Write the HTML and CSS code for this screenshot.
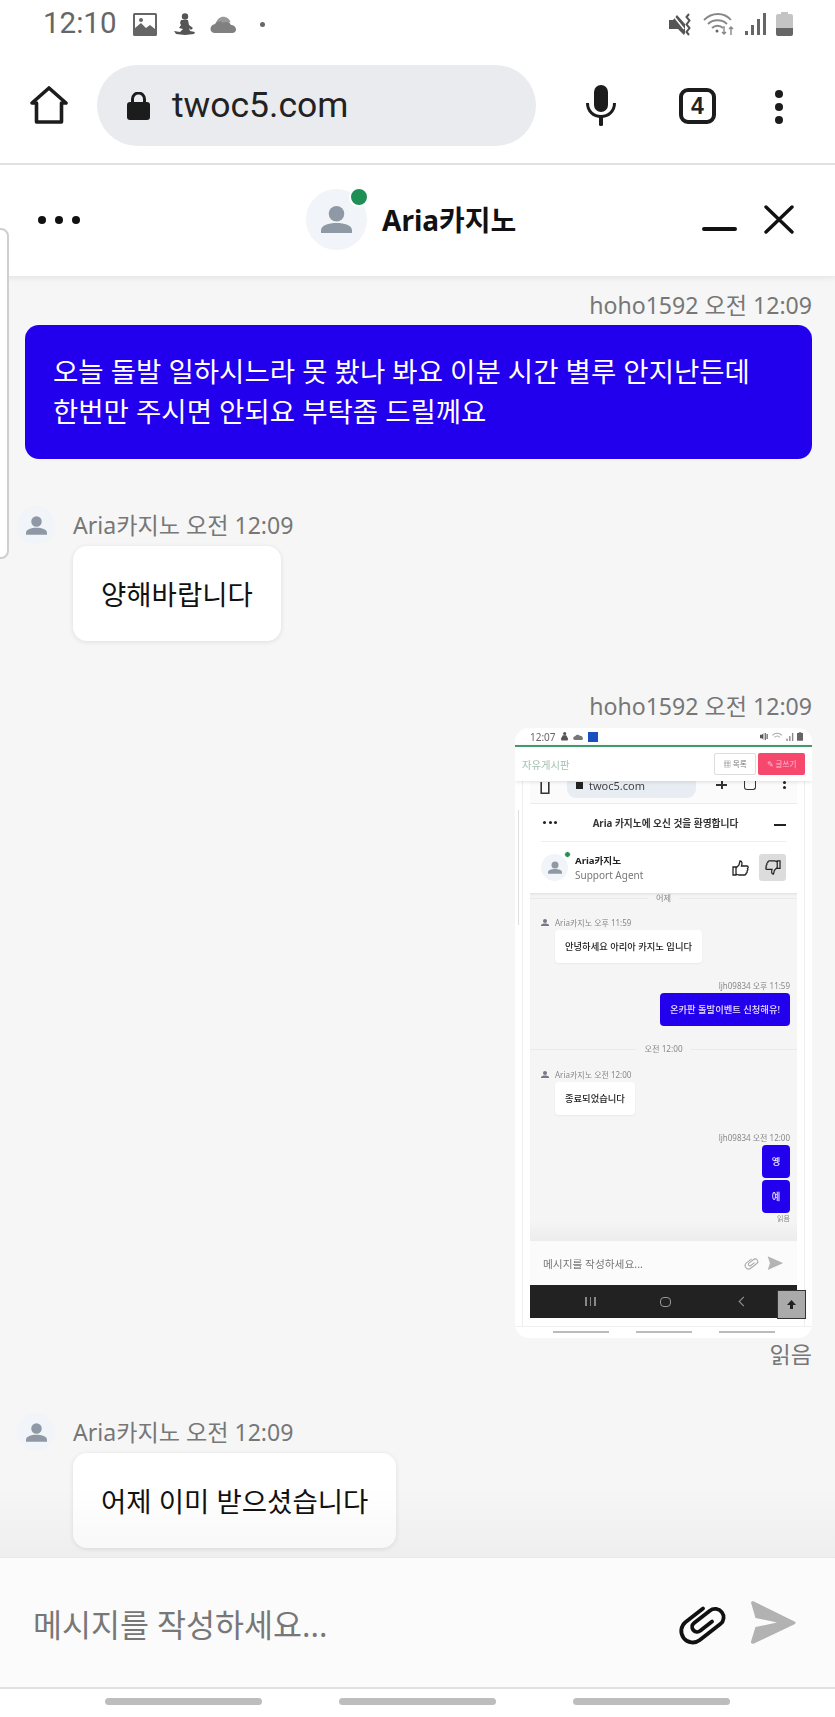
FILE: index.html
```html
<!DOCTYPE html>
<html lang="ko">
<head>
<meta charset="utf-8">
<title>Aria카지노</title>
<link rel="stylesheet" href="styles.css">
</head>
<body>
<svg class="defs" width="0" height="0">
  <symbol id="person" viewBox="0 0 32 28">
    <circle cx="16" cy="8" r="8"/>
    <path d="M0 28v-3c0-5 8-7.500 16-7.500S32 20 32 25v3z"/>
  </symbol>
</svg>
<div class="page">
  <header class="statusbar">
    <span class="clock">12:10</span>
    <svg class="st-pic" width="24" height="23" viewBox="0 0 24 23"><rect width="24" height="23" rx="1.500" fill="#666"/><rect x="2" y="2" width="20" height="19" fill="#fff"/><path d="M2 21v-6l6-5 5 5 4-3 5 4v5z" fill="#666"/><circle cx="8" cy="7" r="2" fill="#666"/></svg>
    <svg class="st-fig" width="21" height="23" viewBox="0 0 21 23" fill="#555"><circle cx="11" cy="3.500" r="3.200"/><path d="M7 7h7l1 5 4 3-2 2-2-2 1 3 5 1-1 2-9 1-9-1-2-3 6 1 3-3-4-1 2-3-1-2z"/></svg>
    <svg class="st-cloud" width="27" height="17" viewBox="0 0 27 17"><path d="M6 7c1-4 5-7 9-6 3 .5 5 3 5.500 5L12 10z" fill="#999"/><path d="M5 17c-6 0-6-8 0-9 2-3 6-3 8-1 3-2 7-1 8 2 6 0 7 8 1 8z" fill="#808080"/></svg>
    <span class="st-dot"></span>
    <span class="st-right">
      <svg width="24" height="23" viewBox="0 0 24 23" fill="#555"><path d="M0 7h4l4-5 8 9v9l-1 2-6-6H0z"/><path d="M3 1l12 15" stroke="#fff" stroke-width="1.500"/><path d="M20 1l-2.500 3 3 3.500-3 4 3 3.500-3 4 2.500 3" fill="none" stroke="#555" stroke-width="2"/></svg>
      <svg width="32" height="23" viewBox="0 0 32 23" fill="none" stroke="#888" stroke-width="1.800"><path d="M1 7c8-8 20-8 27 0"/><path d="M5 11c5-5 14-5 19 0"/><path d="M9 15c3-3 8-3 11 0"/><circle cx="14" cy="18" r="1.500" fill="#666" stroke="none"/><path d="M21 13v8m-2-2 2 2 2-2M28 22v-8m-2 2 2-2 2 2" stroke-width="1.400"/></svg>
      <svg width="21" height="23" viewBox="0 0 21 23" fill="#666"><rect x="0" y="18" width="3" height="4"/><rect x="6" y="12" width="3" height="10"/><rect x="12" y="6" width="3" height="16"/><rect x="18" y="0" width="3" height="22"/></svg>
      <svg class="st-batt" width="17" height="24" viewBox="0 0 17 24"><path d="M5 0h7v2h3a2 2 0 0 1 2 2v15H0V4a2 2 0 0 1 2-2h3z" fill="#c4c4c4"/><path d="M0 16h17v6a2 2 0 0 1-2 2H2a2 2 0 0 1-2-2z" fill="#666"/></svg>
    </span>
  </header>

  <nav class="toolbar">
    <svg class="home" width="38" height="38" viewBox="0 0 38 38" fill="none" stroke="#1c1c1c" stroke-width="3.600" stroke-linejoin="round"><path d="M2 17 19 2l17 15h-4.500v19h-25V17z"/></svg>
    <div class="urlpill">
      <svg width="23" height="28" viewBox="0 0 23 28"><path d="M5.500 11V7a6 6 0 0 1 12 0v4" fill="none" stroke="#1c1c1c" stroke-width="3"/><rect y="10" width="23" height="18" rx="3" fill="#1c1c1c"/></svg>
      <span class="url">twoc5.com</span>
    </div>
    <svg class="mic" width="30" height="41" viewBox="0 0 30 41"><rect x="8" y="0" width="14" height="27" rx="7" fill="#1c1c1c"/><path d="M1.500 18c0 18 27 18 27 0" fill="none" stroke="#1c1c1c" stroke-width="3"/><rect x="13" y="30" width="4" height="11" rx="1.500" fill="#1c1c1c"/></svg>
    <div class="tabs">4</div>
    <div class="kebab"><i></i><i></i><i></i></div>
  </nav>

  <section class="chat-header">
    <div class="hdots"><i></i><i></i><i></i></div>
    <div class="havatar">
      <svg class="hperson" width="31" height="29"><use href="#person"/></svg>
      <span class="online"></span>
    </div>
    <div class="htitle">Aria카지노</div>
    <div class="hactions">
      <span class="minus"></span>
      <svg width="30" height="29" viewBox="0 0 30 29" fill="none" stroke="#111" stroke-width="3.400" stroke-linecap="round"><path d="M2 2l26 25M28 2 2 27"/></svg>
    </div>
  </section>

  <main class="chat-body">
    <div class="meta meta-right">hoho1592 오전 12:09</div>
    <div class="bubble bubble-blue">오늘 돌발 일하시느라 못 봤나 봐요 이분 시간 별루 안지난든데 한번만 주시면 안되요 부탁좀 드릴께요</div>

    <div class="agent-row first">
      <span class="mini-avatar"><svg width="21" height="19"><use href="#person"/></svg></span>
      <span class="meta">Aria카지노 오전 12:09</span>
    </div>
    <div class="bubble bubble-white">양해바랍니다</div>

    <div class="meta meta-right second">hoho1592 오전 12:09</div>

    <figure class="shot">
      <div class="shot-status">
        <span>12:07</span>
        <svg width="9" height="9" viewBox="0 0 21 23" fill="#555"><circle cx="11" cy="4" r="4"/><path d="M6 8h9l5 10-2 4H3L1 18z"/></svg>
        <svg width="11" height="7" viewBox="0 0 27 17"><path d="M5 17c-6 0-6-8 0-9 2-4 9-6 12-1 6-2 10 8 5 10z" fill="#777"/></svg>
        <span class="shot-thumb"></span>
        <span class="shot-status-r">
          <svg width="9" height="9" viewBox="0 0 24 23" fill="#555"><path d="M0 7h5l4-4v17l-4-4H0z"/><path d="M14 2v19M19 5v13" stroke="#555" stroke-width="3"/></svg>
          <svg width="11" height="9" viewBox="0 0 32 23" fill="none" stroke="#aaa" stroke-width="3"><path d="M1 8c8-8 20-8 28 0M7 14c5-5 11-5 16 0"/></svg>
          <svg width="8" height="8" viewBox="0 0 21 23" fill="#888"><rect y="16" width="4" height="7"/><rect x="8" y="9" width="4" height="14"/><rect x="16" width="4" height="23"/></svg>
          <svg width="6" height="9" viewBox="0 0 17 24" fill="#666"><path d="M5 0h7v2h5v22H0V2h5z"/></svg>
        </span>
      </div>
      <div class="shot-subhead">
        <span class="shot-board">자유게시판</span>
        <span class="shot-list">▦ 목록</span>
        <span class="shot-write">✎ 글쓰기</span>
      </div>
      <div class="shot-frame">
        <div class="shot-browser">
          <svg width="12" height="12" viewBox="0 0 38 38" fill="none" stroke="#333" stroke-width="5"><path d="M7 0v36h24V0"/></svg>
          <span class="shot-url"><i></i>twoc5.com</span>
          <span class="shot-plus"></span>
          <span class="shot-tab"></span>
          <span class="shot-kebab"><i></i><i></i></span>
        </div>
        <div class="shot-title">
          <span class="shot-dots"><i></i><i></i><i></i></span>
          <span class="shot-title-text">Aria 카지노에 오신 것을 환영합니다</span>
          <span class="shot-minus"></span>
        </div>
        <div class="shot-agent">
          <span class="shot-avatar"><svg width="14" height="13"><use href="#person"/></svg><b></b></span>
          <span class="shot-agent-text"><strong>Aria카지노</strong><span>Support Agent</span></span>
          <svg class="shot-like" width="17" height="16" viewBox="0 0 17 16" fill="none" stroke="#222" stroke-width="1.300"><path d="M1 7h3v8H1zM4 8l3-3 1-4c2 0 2.500 2 1.500 5H15c1.500 0 1.500 2 .5 2.500.8 1 .3 2-.5 2.500.4 1 0 2-1 2.300.2 1-.5 1.700-1.500 1.700H7c-1 0-2-.5-3-1"/></svg>
          <span class="shot-dislike"><svg width="16" height="15" viewBox="0 0 17 16" fill="none" stroke="#222" stroke-width="1.300"><path d="M16 9h-3V1h3zM13 8l-3 3-1 4c-2 0-2.500-2-1.500-5H2C.5 10 .5 8 1.500 7.500.7 6.500 1.200 5.500 2 5c-.4-1-.1-2 1-2.300C2.800 1.700 3.500 1 4.500 1H10c1 0 2 .5 3 1"/></svg></span>
        </div>
        <div class="shot-chat">
          <div class="shot-sep shot-sep-top"><span>어제</span></div>
          <div class="shot-meta-row s1"><svg width="8" height="7"><use href="#person"/></svg><span>Aria카지노 오후 11:59</span></div>
          <div class="shot-bub shot-white">안녕하세요 아리아 카지노 입니다</div>
          <div class="shot-meta-r s2">ljh09834 오후 11:59</div>
          <div class="shot-bub shot-blue">온카판 돌발이벤트 신청해유!</div>
          <div class="shot-sep s3"><span>오전 12:00</span></div>
          <div class="shot-meta-row s4"><svg width="8" height="7"><use href="#person"/></svg><span>Aria카지노 오전 12:00</span></div>
          <div class="shot-bub shot-white">종료되었습니다</div>
          <div class="shot-meta-r s5">ljh09834 오전 12:00</div>
          <div class="shot-bub shot-blue shot-tiny">옝</div>
          <div class="shot-bub shot-blue shot-tiny s6">예</div>
          <div class="shot-read">읽음</div>
        </div>
        <div class="shot-composer">
          <span class="shot-place">메시지를 작성하세요...</span>
          <svg width="16" height="14" viewBox="-2 -2 54 44" fill="none" stroke="#aaa" stroke-width="3.500"><g transform="rotate(-38 25 19)"><path d="M32 8H10a11.500 11.500 0 0 0 0 23h26a8.500 8.500 0 0 0 0-17H16a5 5 0 0 0 0 10h16"/></g></svg>
          <svg width="16" height="14" viewBox="0 0 47 43"><path d="M1 1l45 20a1 1 0 0 1 0 2L1 43l7-21z" fill="#b4b4b4"/></svg>
        </div>
        <div class="shot-nav">
          <span class="shot-iii"><i></i><i></i><i></i></span>
          <span class="shot-o"></span>
          <span class="shot-back"></span>
        </div>
        <div class="shot-gap"></div>
      </div>
      <div class="shot-pills"><i></i><i></i><i></i></div>
      <span class="shot-top"><svg width="11" height="11" viewBox="0 0 11 11" fill="#222"><path d="M5.500 1 10 6H7v4H4V6H1z"/></svg></span>
      <span class="shot-edge"></span>
    </figure>
    <div class="meta meta-right read">읽음</div>

    <div class="agent-row third">
      <span class="mini-avatar"><svg width="21" height="19"><use href="#person"/></svg></span>
      <span class="meta">Aria카지노 오전 12:09</span>
    </div>
    <div class="bubble bubble-white b3">어제 이미 받으셨습니다</div>
    <div class="fade"></div>
  </main>

  <footer class="composer">
    <span class="placeholder">메시지를 작성하세요...</span>
    <svg class="clip" width="46" height="40" viewBox="0 0 46 40" fill="none" stroke="#111" stroke-width="3.800" stroke-linecap="round"><g transform="rotate(-38 23 20)"><path d="M32 8.500H10a11.500 11.500 0 0 0 0 23h26a8.500 8.500 0 0 0 0-17H16a5 5 0 0 0 0 10h15"/></g></svg>
    <svg class="send" width="47" height="43" viewBox="0 0 47 43"><path d="M2 1.500c.5-1 1.500-1.500 3-1l40.500 20c1.500.7 1.500 2 0 2.700L5 42.500c-2 .7-3.500-.5-3-2L6.500 26 28 21.500 6.500 17z" fill="#b2b2b2"/></svg>
  </footer>

  <div class="navbar"><i></i><i></i><i></i></div>

  <span class="side-panel"></span>
</div>
</body>
</html>
```

FILE: styles.css
```css
* { box-sizing: border-box; }
html, body { margin: 0; padding: 0; background: #fff; }
.defs { position: absolute; }
.page {
  position: relative;
  width: 835px;
  height: 1717px;
  overflow: hidden;
  display: flex;
  flex-direction: column;
  font-family: "Noto Sans", "Noto Sans CJK KR", sans-serif;
  color: #111;
}

/* status bar */
.statusbar { height: 48px; display: flex; align-items: center; padding: 0 42px 0 43px; flex: none; }
.clock { font: 29.500px/1 Roboto, sans-serif; color: #666; width: 90px; }
.st-fig { margin-left: 17px; }
.st-cloud { margin-left: 15px; }
.st-dot { width: 5px; height: 5px; border-radius: 50%; background: #666; margin-left: 23px; }
.st-right { margin-left: auto; display: flex; align-items: center; gap: 10px; }

/* browser toolbar */
.toolbar { height: 117px; flex: none; display: flex; align-items: flex-start; border-bottom: 2px solid #e3e3e3; padding-left: 30px; position: relative; }
.home { margin-top: 38px; }
.urlpill { width: 439px; height: 81px; margin: 17px 0 0 29px; border-radius: 41px; background: #e9ebef; display: flex; align-items: center; padding-left: 30px; gap: 22px; }
.url { font: 35.500px/1 Roboto, sans-serif; color: #222; }
.mic { margin: 37px 0 0 50px; }
.tabs { width: 37px; height: 36px; margin: 40px 0 0 63px; border: 4px solid #1c1c1c; border-radius: 9px; font: bold 23px/28px "Liberation Sans Narrow", "Liberation Sans", sans-serif; text-align: center; color: #222; }
.kebab { margin: 42px 0 0 59px; display: flex; flex-direction: column; gap: 5px; }
.kebab i { width: 8px; height: 8px; border-radius: 50%; background: #1c1c1c; display: block; }

/* chat header */
.chat-header { height: 111px; flex: none; display: flex; align-items: center; padding-left: 38px; background: #fff; box-shadow: 0 2px 6px rgba(0,0,0,.08); position: relative; z-index: 2; }
.hdots { display: flex; gap: 9px; margin-top: -2px; }
.hdots i { width: 8px; height: 8px; border-radius: 50%; background: #111; display: block; }
.havatar { width: 61px; height: 61px; margin: -2px 0 0 226px; border-radius: 50%; background: #f1f4f8; position: relative; display: flex; align-items: center; justify-content: center; }
.hperson { fill: #8f99a5; margin-top: -1px; }
.online { position: absolute; top: -2px; right: -2px; width: 20px; height: 20px; border-radius: 50%; background: #1f8f55; border: 2px solid #fff; }
.htitle { font-size: 28px; font-weight: 700; margin: -2px 0 0 15px; line-height: 36px; }
.hactions { margin-left: auto; padding-right: 41px; display: flex; align-items: center; gap: 27px; margin-top: -2px; }
.minus { width: 35px; height: 4px; border-radius: 2px; background: #111; margin-top: 19px; }

/* chat body */
.chat-body { flex: 1; min-height: 0; position: relative; background: #f6f6f6; padding: 14px 23px 0 25px; display: flex; flex-direction: column; overflow: hidden; }
.chat-body > * { flex: none; }
.meta { font-size: 23.100px; line-height: 30px; color: #777; }
.meta-right { text-align: right; }
.second { margin-top: 50px; }
.read { margin-top: 1px; }
.bubble { font-size: 27.500px; line-height: 40px; border-radius: 14px; word-break: keep-all; }
.bubble-blue { margin-top: 5px; background: #2200ee; color: #fff; padding: 27px 28px; width: 787px; }
.bubble-white { align-self: flex-start; margin: 2px 0 0 48px; background: #fff; color: #111; padding: 29px 28px 26px; box-shadow: 0 1px 5px rgba(0,0,0,.1); }
.b3 { margin-top: 2px; }
.agent-row { display: flex; align-items: center; gap: 18px; margin-left: -8px; height: 38px; }
.first { margin-top: 47px; }
.third { margin-top: 44px; }
.mini-avatar { width: 38px; height: 38px; border-radius: 50%; background: #f1f4f8; display: flex; align-items: center; justify-content: center; fill: #8f99a5; flex: none; }
.fade { position: absolute; left: 0; right: 0; bottom: 0; height: 70px; background: linear-gradient(rgba(0,0,0,0), rgba(0,0,0,.03)); }

/* composer */
.composer { height: 132px; flex: none; background: #fbfbfb; border-top: 1px solid #e9e9e9; border-bottom: 2px solid #e1e1e1; display: flex; align-items: center; padding: 0 39px 0 33px; }
.placeholder { font-size: 31.500px; color: #777; margin-right: auto; }
.clip { margin-right: 23px; overflow: visible; }
.navbar { height: 28px; flex: none; display: flex; align-items: flex-start; justify-content: center; gap: 77px; padding-top: 9px; }
.navbar i { width: 157px; height: 7px; border-radius: 4px; background: #bdbdbd; display: block; }
.side-panel { position: absolute; left: -10px; top: 228px; width: 19px; height: 331px; border: 2px solid #cfcfcf; border-radius: 8px; background: #fff; z-index: 3; }

/* embedded screenshot */
.shot { position: relative; align-self: flex-end; margin: 7px 0 0; width: 297px; height: 610px; background: #fff; border-radius: 14px; overflow: hidden; display: flex; flex-direction: column; filter: blur(.3px); color: #222; }
.shot-status { height: 17px; flex: none; display: flex; align-items: center; gap: 4px; padding: 0 9px 0 15px; font-size: 10px; color: #666; }
.shot-thumb { width: 10px; height: 10px; background: #1a4fc0; }
.shot-status-r { margin-left: auto; display: flex; align-items: center; gap: 3px; }
.shot-subhead { height: 36px; flex: none; border-top: 2px solid #3f9a6c; background: #fff; display: flex; align-items: center; padding: 0 7px; position: relative; z-index: 1; box-shadow: 0 1px 4px rgba(0,0,0,.12); }
.shot-board { font-size: 10.300px; color: #a2c2ae; margin-right: auto; }
.shot-list { width: 42px; height: 22px; border: 1px solid #ddd; border-radius: 2px; font-size: 7.500px; line-height: 20px; text-align: center; color: #777; background: #fff; }
.shot-write { width: 47px; height: 22px; margin-left: 2px; border-radius: 2px; background: #f6486c; color: #fbd; font-size: 7.500px; line-height: 22px; text-align: center; }
.shot-frame { margin: 0 7px; flex: none; border-left: 1px solid #eee; border-right: 1px solid #eee; padding: 0 7px; height: 545px; display: flex; flex-direction: column; }
.shot-browser { height: 23px; flex: none; display: flex; align-items: flex-start; padding-left: 9px; gap: 12px; border-bottom: 1px solid #ececec; background: #fbfbfb; }
.shot-browser svg { margin-top: 1px; }
.shot-url { width: 129px; height: 17px; margin-left: 4px; border-radius: 0 0 9px 9px; background: #e8edf4; font-size: 11px; line-height: 9px; color: #444; padding-left: 9px; display: flex; align-items: flex-start; gap: 6px; }
.shot-url i { width: 7px; height: 7px; background: #222; margin-top: 1px; }
.shot-plus { width: 11px; height: 8px; margin-left: 8px; background: linear-gradient(#333,#333) center/2px 100% no-repeat, linear-gradient(#333,#333) center 3px/100% 2px no-repeat; }
.shot-tab { width: 12px; height: 9px; margin-left: 5px; border: 1.500px solid #333; border-top: 0; border-radius: 0 0 3px 3px; }
.shot-kebab { margin-left: 15px; display: flex; flex-direction: column; gap: 2px; }
.shot-kebab i { width: 3px; height: 3px; border-radius: 50%; background: #222; display: block; }
.shot-title { height: 38px; flex: none; margin: 0 11px; display: flex; align-items: center; justify-content: space-between; border-bottom: 1px solid #eee; padding-left: 2px; }
.shot-dots { display: flex; gap: 2.500px; }
.shot-dots i { width: 3px; height: 3px; border-radius: 50%; background: #222; display: block; }
.shot-title-text { font-size: 9.700px; font-weight: 700; color: #333; }
.shot-minus { width: 12px; height: 2px; background: #222; margin-top: 4px; }
.shot-agent { height: 51px; flex: none; margin: 0 11px; display: flex; align-items: center; }
.shot-avatar { width: 27px; height: 27px; border-radius: 50%; background: #f1f4f8; position: relative; fill: #8f99a5; display: flex; align-items: center; justify-content: center; }
.shot-avatar b { position: absolute; top: -3px; right: -3px; width: 7px; height: 7px; border-radius: 50%; background: #1f8f55; border: 1px solid #fff; }
.shot-agent-text { margin-left: 7px; display: flex; flex-direction: column; font-size: 10px; line-height: 14px; color: #777; margin-right: auto; }
.shot-agent-text strong { font-size: 9.600px; color: #222; }
.shot-like { margin-right: 10px; }
.shot-dislike { width: 27px; height: 27px; border-radius: 3px; background: #dcdcdc; display: flex; align-items: center; justify-content: center; }
.shot-chat { height: 348px; flex: none; background: #f5f5f5; display: flex; flex-direction: column; padding: 0 7px 0 11px; box-shadow: inset 0 3px 3px -2px rgba(0,0,0,.1); background-image: linear-gradient(rgba(0,0,0,0) 94%, rgba(0,0,0,.035)); }
.shot-sep { display: flex; align-items: center; gap: 8px; margin: 0 -7px 0 -11px; font-size: 8.200px; line-height: 10px; color: #888; }
.shot-sep::before, .shot-sep::after { content: ""; flex: 1; height: 1px; background: #eaeaea; }
.shot-sep-top { margin-top: 0; }
.shot-meta-row { display: flex; align-items: center; gap: 6px; font-size: 8px; line-height: 11px; color: #888; fill: #778; }
.s1 { margin-top: 14px; }
.s2 { margin-top: 16px; }
.s3 { margin-top: 18px; }
.s4 { margin-top: 15px; }
.s5 { margin-top: 13px; }
.s6 { margin-top: 4px; }
.shot-meta-r { text-align: right; font-size: 8px; line-height: 11px; color: #888; margin-top: 17px; }
.shot-bub { font-size: 9.300px; line-height: 13px; border-radius: 4px; padding: 10px; font-weight: 500; }
.shot-white { align-self: flex-start; background: #fff; margin: 2px 0 0 14px; box-shadow: 0 1px 2px rgba(0,0,0,.05); }
.shot-blue { align-self: flex-end; background: #2200ee; color: #ecdfff; margin-top: 2px; }
.shot-tiny { width: 28px; text-align: center; padding: 10px 0; }
.shot-read { text-align: right; font-size: 7px; line-height: 10px; color: #888; margin-top: 1px; }
.shot-composer { height: 44px; flex: none; background: #fbfbfb; display: flex; align-items: center; padding: 0 14px 0 13px; gap: 7px; }
.shot-place { font-size: 10.700px; color: #777; margin-right: auto; }
.shot-nav { height: 33px; flex: none; background: #222; display: flex; align-items: center; padding-left: 55px; gap: 64px; }
.shot-iii { display: flex; gap: 3px; }
.shot-iii i { width: 1.500px; height: 9px; background: #888; display: block; }
.shot-o { width: 11px; height: 10px; border: 1.500px solid #999; border-radius: 4px; }
.shot-back { width: 7px; height: 7px; border-left: 1.500px solid #999; border-bottom: 1.500px solid #999; transform: rotate(45deg); margin-left: 5px; }
.shot-gap { flex: 1; }
.shot-pills { height: 12px; flex: none; display: flex; justify-content: center; gap: 27px; border-radius: 0 0 14px 14px; border-top: 1px solid #f0f0f0; padding-top: 4px; }
.shot-pills i { width: 56px; height: 2px; background: #bbb; display: block; }
.shot-top { position: absolute; left: 262px; top: 562px; width: 29px; height: 29px; background: #aaa; border: 1px solid #333; display: flex; align-items: center; justify-content: center; }
.shot-edge { position: absolute; left: 3px; top: 82px; width: 1px; height: 115px; background: #ddd; }
```
